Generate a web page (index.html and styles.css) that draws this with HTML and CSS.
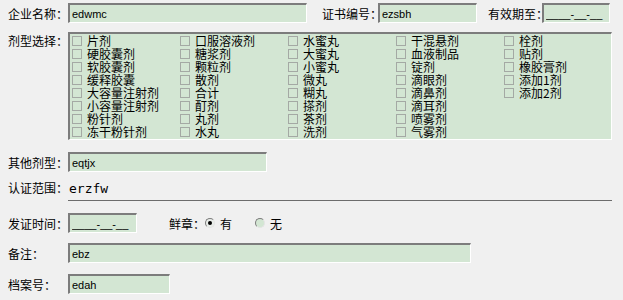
FILE: index.html
```html
<!DOCTYPE html>
<html lang="zh-CN">

  <head>
    <meta charset="UTF-8">
    <title>药品生产证书</title>
    <link rel="stylesheet" href="styles.css">
  </head>

  <body>
    <div class="form">

      <div class="row row-top">
        <span class="lbl">企业名称：</span>
        <input class="field w-name" type="text" value="edwmc">
        <span class="lbl-inline cert">证书编号：</span>
        <input class="field w-cert" type="text" value="ezsbh">
        <span class="lbl-inline valid">有效期至：</span>
        <input class="field w-valid" type="text" value="____-__-__">
      </div>

      <div class="row row-types">
        <span class="lbl">剂型选择：</span>
        <div class="types">
          <label><input type="checkbox">片剂</label>
          <label><input type="checkbox">硬胶囊剂</label>
          <label><input type="checkbox">软胶囊剂</label>
          <label><input type="checkbox">缓释胶囊</label>
          <label><input type="checkbox">大容量注射剂</label>
          <label><input type="checkbox">小容量注射剂</label>
          <label><input type="checkbox">粉针剂</label>
          <label><input type="checkbox">冻干粉针剂</label>

          <label><input type="checkbox">口服溶液剂</label>
          <label><input type="checkbox">糖浆剂</label>
          <label><input type="checkbox">颗粒剂</label>
          <label><input type="checkbox">散剂</label>
          <label><input type="checkbox">合计</label>
          <label><input type="checkbox">酊剂</label>
          <label><input type="checkbox">丸剂</label>
          <label><input type="checkbox">水丸</label>

          <label><input type="checkbox">水蜜丸</label>
          <label><input type="checkbox">大蜜丸</label>
          <label><input type="checkbox">小蜜丸</label>
          <label><input type="checkbox">微丸</label>
          <label><input type="checkbox">糊丸</label>
          <label><input type="checkbox">搽剂</label>
          <label><input type="checkbox">茶剂</label>
          <label><input type="checkbox">洗剂</label>

          <label><input type="checkbox">干混悬剂</label>
          <label><input type="checkbox">血液制品</label>
          <label><input type="checkbox">锭剂</label>
          <label><input type="checkbox">滴眼剂</label>
          <label><input type="checkbox">滴鼻剂</label>
          <label><input type="checkbox">滴耳剂</label>
          <label><input type="checkbox">喷雾剂</label>
          <label><input type="checkbox">气雾剂</label>

          <label><input type="checkbox">栓剂</label>
          <label><input type="checkbox">贴剂</label>
          <label><input type="checkbox">橡胶膏剂</label>
          <label><input type="checkbox">添加1剂</label>
          <label><input type="checkbox">添加2剂</label>
        </div>
      </div>

      <div class="row row-other">
        <span class="lbl">其他剂型：</span>
        <input class="field w-other" type="text" value="eqtjx">
      </div>

      <div class="row row-scope">
        <span class="lbl">认证范围：</span>
        <div class="scope">erzfw</div>
      </div>

      <div class="row row-issue">
        <span class="lbl">发证时间：</span>
        <input class="field w-issue" type="text" value="____-__-__">
        <span class="lbl-inline seal">鲜章：</span>
        <label class="radio"><span class="dot on"></span>有</label>
        <label class="radio"><span class="dot"></span>无</label>
      </div>

      <div class="row row-note">
        <span class="lbl">备注：</span>
        <input class="field w-note" type="text" value="ebz">
      </div>

      <div class="row row-file">
        <span class="lbl">档案号：</span>
        <input class="field w-file" type="text" value="edah">
      </div>

    </div>
  </body>

</html>
```

FILE: styles.css
```css
* {
  box-sizing: border-box;
}

body {
  margin: 0;
  background: #f0f0f0;
  color: #000;
  font-family: 'Noto Sans CJK SC', sans-serif;
  font-size: 12px;
}

.form {
  padding: 3px 0 0 8px;
  width: 613px;
}

.row {
  display: flex;
  align-items: center;
}

.lbl {
  width: 60px;
  flex: none;
  white-space: nowrap;
  line-height: 13px;
}

.lbl-inline {
  white-space: nowrap;
  line-height: 13px;
}

/* 凹陷输入框 */
.field {
  height: 20px;
  margin: 0;
  padding: 0 0 0 2px;
  border-style: solid;
  border-width: 2px 1px 1px 2px;
  border-color: #7c7c7c #fff #fff #7c7c7c;
  background: #d3e6d3;
  font-family: 'Liberation Sans', sans-serif;
  font-size: 11px;
  color: #000;
  outline: none;
}

.w-name {
  width: 239px;
}

.cert {
  margin-left: 15px;
  width: 56px;
}

.w-cert {
  width: 99px;
}

.valid {
  margin-left: 11px;
  width: 54px;
}

.w-valid {
  width: 68px;
}

/* 剂型选择 */
.row-types {
  margin-top: 9px;
  align-items: flex-start;
}

.row-types .lbl {
  padding-top: 2px;
}

.types {
  display: grid;
  grid-auto-flow: column;
  grid-template-rows: repeat(8, 13px);
  grid-template-columns: repeat(5, 108px);
  width: 544px;
  height: 108px;
  padding: 0 0 0 2px;
  border-style: solid;
  border-width: 2px 1px 1px 2px;
  border-color: #7c7c7c #fff #fff #7c7c7c;
  background: #d3e6d3;
}

.types label {
  display: flex;
  align-items: center;
  line-height: 13px;
  white-space: nowrap;
}

.types input {
  appearance: none;
  -webkit-appearance: none;
  width: 10px;
  height: 10px;
  margin: 0 5px 0 0;
  border: 1px solid #a4a9a4;
  background: transparent;
}

.row-other {
  margin-top: 12px;
}

.w-other {
  width: 199px;
}

/* 认证范围 */
.row-scope {
  margin-top: 2px;
  height: 27px;
}

.scope {
  align-self: stretch;
  width: 544px;
  padding: 8px 0 0 1px;
  border-bottom: 1px solid #6c6c6c;
  font-family: 'DejaVu Sans Mono', monospace;
  font-size: 13px;
  line-height: 13px;
}

.row-issue {
  margin-top: 12px;
}

.w-issue {
  width: 69px;
}

.seal {
  margin-left: 32px;
  width: 36px;
}

.radio {
  display: flex;
  align-items: center;
  line-height: 13px;
  width: 50px;
}

.dot {
  position: relative;
  width: 10px;
  height: 10px;
  margin-right: 5px;
  border-radius: 50%;
  border: 1px solid;
  border-color: #7c7c7c #e4e4e4 #e4e4e4 #7c7c7c;
  background: #d3e6d3;
}

.dot.on {
  background: #e8ece8;
}

.dot.on::after {
  content: '';
  position: absolute;
  top: 2px;
  left: 2px;
  width: 4px;
  height: 4px;
  border-radius: 50%;
  background: #000;
}

.row-note {
  margin-top: 10px;
}

.w-note {
  width: 403px;
}

.row-file {
  margin-top: 11px;
}

.w-file {
  width: 102px;
}
```
